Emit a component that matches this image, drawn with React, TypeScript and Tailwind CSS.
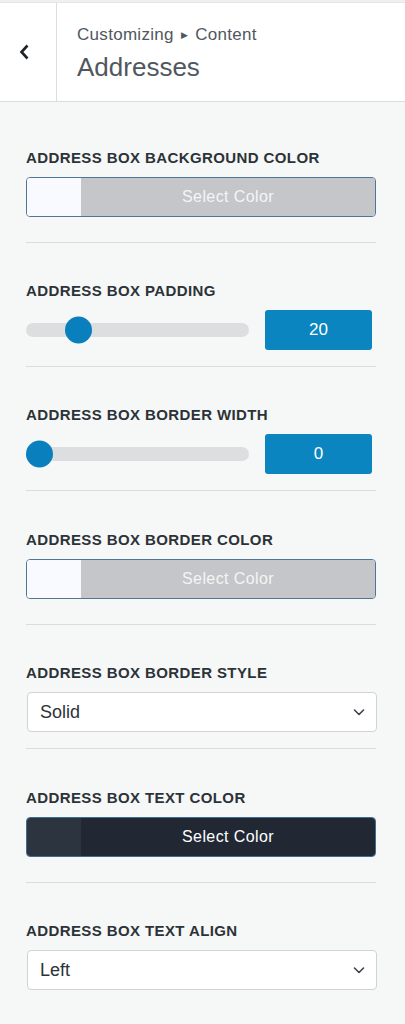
import React from "react";

const Label = ({ children }: { children: React.ReactNode }) => (
  <div className="h-5 text-[15px] leading-5 font-semibold uppercase tracking-[0.4px] text-[#2c3338]">{children}</div>
);

const ColorButton = ({ dark }: { dark?: boolean }) => (
  <div
    className={
      "mt-[9px] flex h-10 w-[350px] overflow-hidden rounded-[4px] border " +
      (dark ? "border-[#3d6e94]" : "border-[#4f7597]")
    }
  >
    <div className={"w-[54px] " + (dark ? "bg-[#2c3440]" : "bg-[#f8faff]")} />
    <div
      className={
        "flex flex-1 items-center justify-center text-[16px] tracking-[0.4px] " +
        (dark ? "bg-[#212834] text-white" : "bg-[#c4c6c9] text-[#f4f5f6]")
      }
    >
      Select Color
    </div>
  </div>
);

const Slider = ({ value, pos }: { value: string; pos: number }) => (
  <div className="mt-[9px] flex h-10 items-center">
    <div className="relative h-[14px] w-[223px] rounded-full bg-[#dcdee0]">
      <div
        className="absolute top-1/2 h-[27px] w-[27px] -translate-y-1/2 rounded-full bg-[#0a7fbd]"
        style={{ left: pos }}
      />
    </div>
    <div className="ml-4 flex h-10 w-[107px] items-center justify-center rounded-[3px] bg-[#0a85c0] text-[17px] text-white">
      {value}
    </div>
  </div>
);

const Select = ({ value }: { value: string }) => (
  <div className="mt-[9px] ml-px flex h-10 w-[350px] items-center justify-between rounded-[4px] border border-[#d0d2d5] bg-white pl-3 pr-[10px] text-[18px] text-[#2c3338]">
    <span>{value}</span>
    <svg width="14" height="14" viewBox="0 0 14 14" fill="none">
      <path d="M2.5 5l4.5 4.5L11.5 5" stroke="#3c434a" strokeWidth="1.6" strokeLinecap="round" strokeLinejoin="round" />
    </svg>
  </div>
);

const Divider = ({ top }: { top: number }) => (
  <div className="h-px w-[350px] bg-[#dcdcde]" style={{ marginTop: top }} />
);

export default function App() {
  return (
    <div className="min-h-screen w-[405px] bg-[#f6f7f7] font-['Liberation_Sans',Arial,sans-serif]">
      <div className="h-[3px] border-b border-[#e6e6e6] bg-[#f0f0f1]" />
      <div className="flex h-[99px] border-b border-[#dcdcde] bg-white">
        <div className="flex w-[57px] items-center border-r border-[#dcdcde] pl-[17px]">
          <svg width="14" height="18" viewBox="0 0 14 18" fill="none">
            <path d="M10.5 2.5L4.5 9l6 6.5" stroke="#1d2327" strokeWidth="2.6" strokeLinejoin="miter" />
          </svg>
        </div>
        <div className="flex flex-col pl-5 pt-[20px] text-[#50575e]">
          <div className="flex items-center text-[17px] leading-6 tracking-[0.3px]">
            Customizing
            <span className="mx-[7px] text-[9px]">▶</span>
            Content
          </div>
          <div className="mt-[4px] text-[26px] leading-8 font-light">Addresses</div>
        </div>
      </div>

      <div className="flex flex-col pl-[26px] pr-[29px] pt-[46px] pb-10">
        <Label>Address Box Background Color</Label>
        <ColorButton />
        <Divider top={25} />

        <div className="mt-[38px]" />
        <Label>Address Box Padding</Label>
        <Slider value="20" pos={39} />
        <Divider top={16} />

        <div className="mt-[38px]" />
        <Label>Address Box Border Width</Label>
        <Slider value="0" pos={0} />
        <Divider top={16} />

        <div className="mt-[39px]" />
        <Label>Address Box Border Color</Label>
        <ColorButton />
        <Divider top={25} />

        <div className="mt-[38px]" />
        <Label>Address Box Border Style</Label>
        <Select value="Solid" />
        <Divider top={16} />

        <div className="mt-[39px]" />
        <Label>Address Box Text Color</Label>
        <ColorButton dark />
        <Divider top={25} />

        <div className="mt-[38px]" />
        <Label>Address Box Text Align</Label>
        <Select value="Left" />
      </div>
    </div>
  );
}
